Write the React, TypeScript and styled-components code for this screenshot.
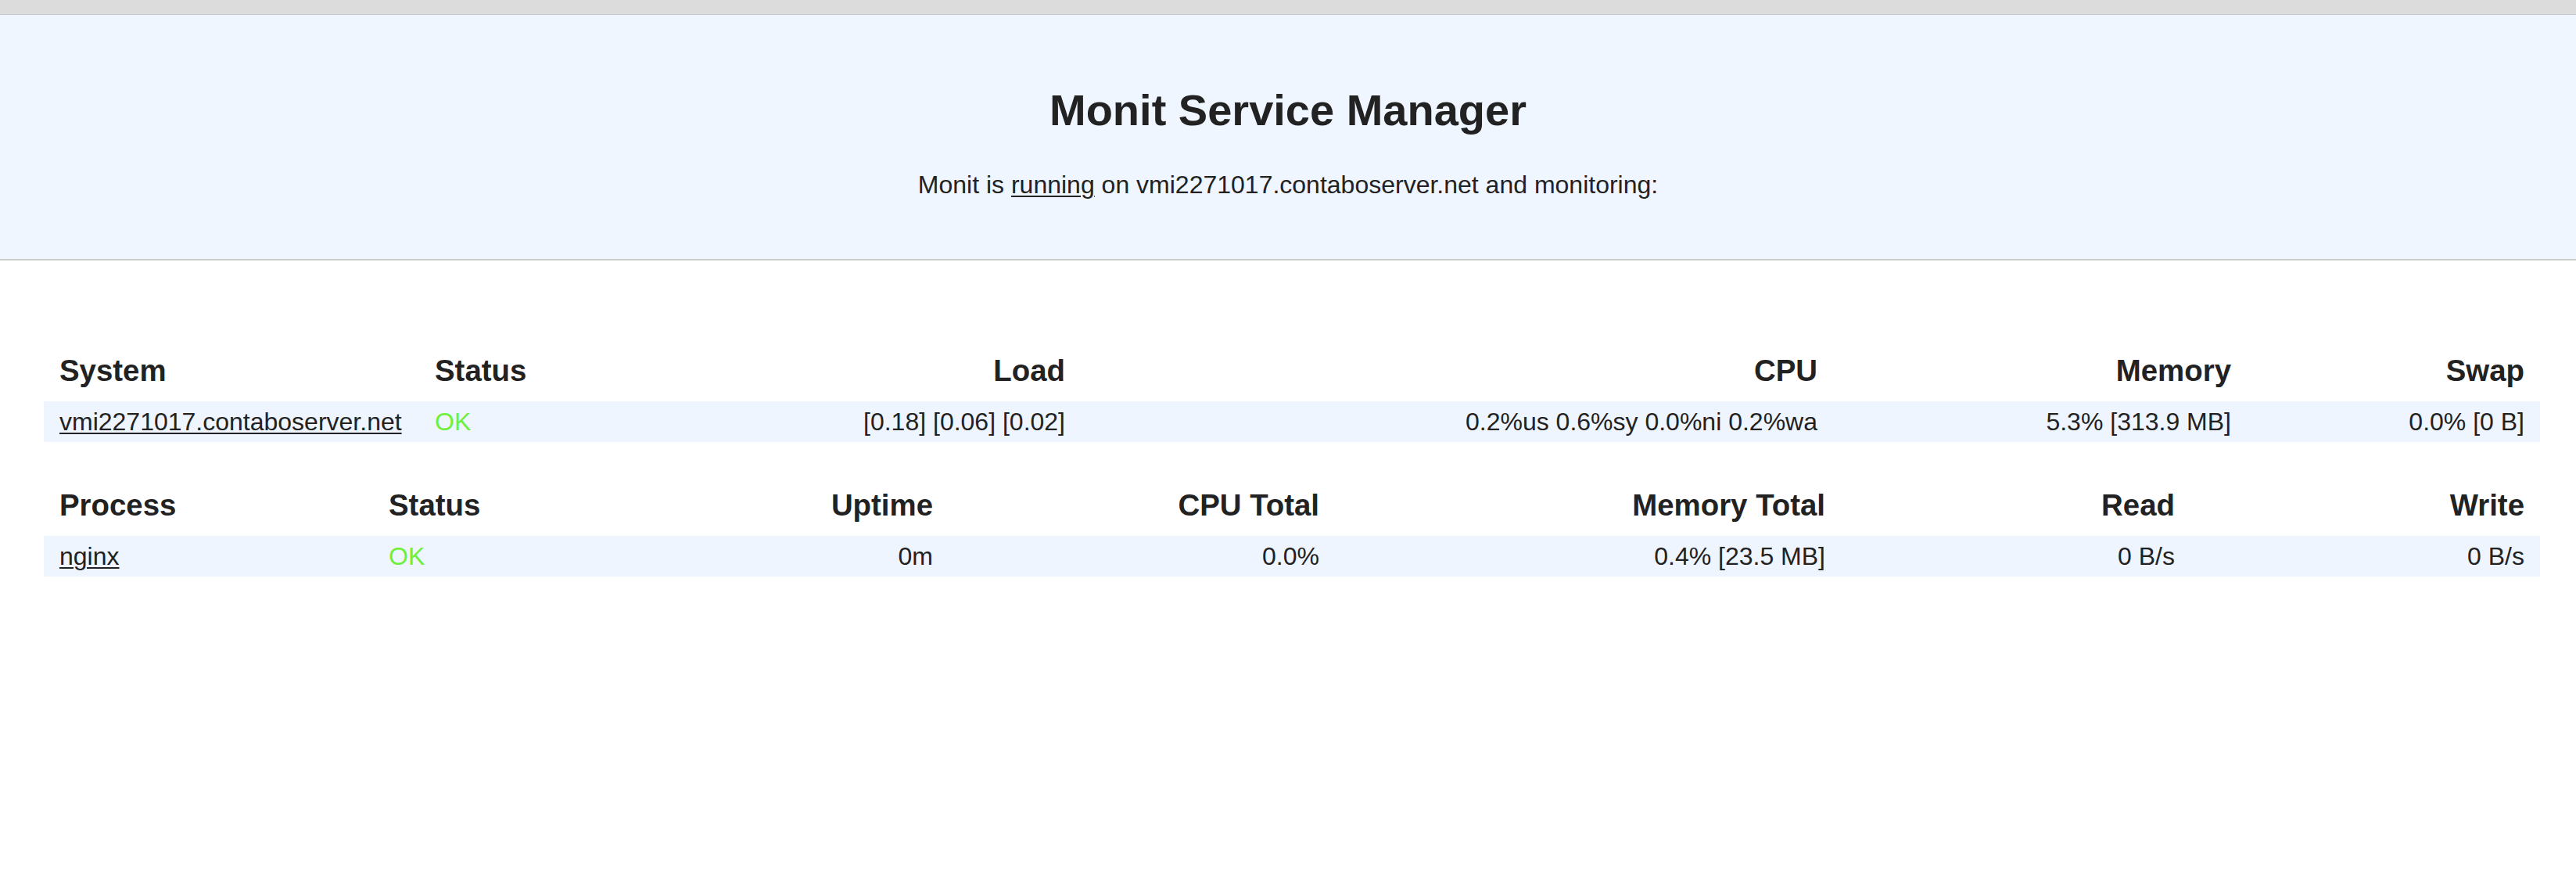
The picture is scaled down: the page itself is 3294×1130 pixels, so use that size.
import React from "react";
import styled, { createGlobalStyle } from "styled-components";

const GlobalStyle = createGlobalStyle`
  html, body {
    margin: 0;
    padding: 0;
    background: #ffffff;
    color: #222222;
    font-family: "Liberation Sans", Arial, Helvetica, sans-serif;
  }
`;

const TopBar = styled.div`
  height: 18px;
  background: #dcdcdc;
  border-bottom: 1px solid #c9c9c9;
`;

const Header = styled.header`
  background: #eff6ff;
  border-bottom: 2px solid #cccccc;
  padding: 90px 0 76px;
  text-align: center;
`;

const Title = styled.h1`
  margin: 0;
  font-size: 56px;
  line-height: 64px;
  font-weight: 700;
  color: #222222;
`;

const Subtitle = styled.p`
  margin: 45px 0 0;
  font-size: 32px;
  line-height: 37px;
  color: #222222;
`;

const Link = styled.a`
  color: #222222;
  text-decoration: underline;
  text-decoration-thickness: 2px;
  text-underline-offset: 3px;
`;

const Main = styled.main`
  padding: 111px 46px 0 56px;
  display: flex;
  flex-direction: column;
  gap: 51px;
`;

const Table = styled.table`
  width: 100%;
  table-layout: fixed;
  border-collapse: collapse;
  border-spacing: 0;
`;

const Col = styled.col<{ $w: number }>`
  width: ${(p) => p.$w}px;
`;

const Th = styled.th<{ $right?: boolean }>`
  padding: 8px 20px 17px;
  font-size: 38.4px;
  line-height: 44px;
  font-weight: 700;
  text-align: ${(p) => (p.$right ? "right" : "left")};
  white-space: nowrap;
  color: #222222;
`;

const Row = styled.tr`
  background: #eef5fe;
`;

const Td = styled.td<{ $right?: boolean; $ok?: boolean }>`
  padding: 8px 20px;
  font-size: 32px;
  line-height: 36px;
  text-align: ${(p) => (p.$right ? "right" : "left")};
  color: ${(p) => (p.$ok ? "#6ef03c" : "#222222")};
  white-space: nowrap;
`;

type Column = { label: string; width: number; right?: boolean };

const systemCols: Column[] = [
  { label: "System", width: 480 },
  { label: "Status", width: 300 },
  { label: "Load", width: 546, right: true },
  { label: "CPU", width: 962, right: true },
  { label: "Memory", width: 529, right: true },
  { label: "Swap", width: 375, right: true },
];

const processCols: Column[] = [
  { label: "Process", width: 421 },
  { label: "Status", width: 300 },
  { label: "Uptime", width: 436, right: true },
  { label: "CPU Total", width: 494, right: true },
  { label: "Memory Total", width: 647, right: true },
  { label: "Read", width: 447, right: true },
  { label: "Write", width: 447, right: true },
];

function DataTable({
  cols,
  name,
  cells,
}: {
  cols: Column[];
  name: string;
  cells: string[];
}) {
  return (
    <Table>
      <colgroup>
        {cols.map((c) => (
          <Col key={c.label} $w={c.width} />
        ))}
      </colgroup>
      <thead>
        <tr>
          {cols.map((c) => (
            <Th key={c.label} $right={c.right}>
              {c.label}
            </Th>
          ))}
        </tr>
      </thead>
      <tbody>
        <Row>
          <Td>
            <Link href="#">{name}</Link>
          </Td>
          <Td $ok>OK</Td>
          {cells.map((v, i) => (
            <Td key={i} $right>
              {v}
            </Td>
          ))}
        </Row>
      </tbody>
    </Table>
  );
}

export default function App() {
  return (
    <>
      <GlobalStyle />
      <TopBar />
      <Header>
        <Title>Monit Service Manager</Title>
        <Subtitle>
          Monit is <Link href="#">running</Link> on vmi2271017.contaboserver.net
          and monitoring:
        </Subtitle>
      </Header>
      <Main>
        <DataTable
          cols={systemCols}
          name="vmi2271017.contaboserver.net"
          cells={[
            "[0.18] [0.06] [0.02]",
            "0.2%us 0.6%sy 0.0%ni 0.2%wa",
            "5.3% [313.9 MB]",
            "0.0% [0 B]",
          ]}
        />
        <DataTable
          cols={processCols}
          name="nginx"
          cells={["0m", "0.0%", "0.4% [23.5 MB]", "0 B/s", "0 B/s"]}
        />
      </Main>
    </>
  );
}
